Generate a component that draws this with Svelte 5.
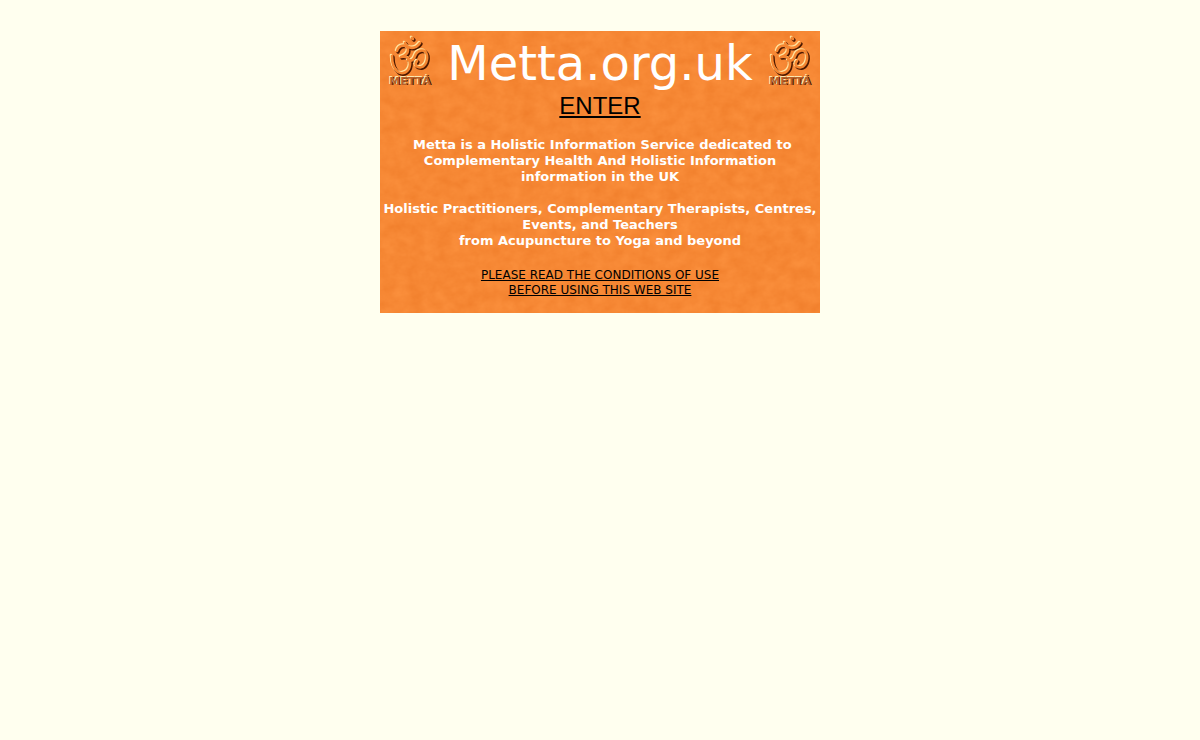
<script>
  const marks = ["left", "right"];
</script>

{#snippet emblem(side)}
  <svg class="emblem" viewBox="0 0 60 60" role="img" aria-label="Metta">
    <defs>
      <g id="om-{side}" fill="none" stroke-linecap="round" stroke-linejoin="round">
        <path d="M17 20 C19 13 28 13 28 19 C28 23 24 25 21 26 C27 25 31 28 30 34 C29 41 23 44 18 41 C14 38 12 33 12 25" />
        <path d="M28 29 C32 31 34 28 35 25 C37 19 45 17 47 24 C48 31 44 38 38 36 C35 35 35 32 37 30" />
        <path d="M25 12 C28 19 36 18 40 12" />
        <path d="M32 7 L33 8" />
      </g>
    </defs>
    <use href="#om-{side}" x="1" y="1" stroke="#4a1800" stroke-width="3.4" />
    <use href="#om-{side}" x="-1" y="-1" stroke="#ffe4a0" stroke-width="2.6" />
    <use href="#om-{side}" stroke="#f48530" stroke-width="2.6" />
    <g class="name" text-anchor="middle">
      <text x="31" y="54" fill="#3c1200">METTÁ</text>
      <text x="29" y="53" fill="#ffe8b0">METTÁ</text>
      <text x="30" y="54" fill="#b8602a">METTÁ</text>
    </g>
  </svg>
{/snippet}

<main class="card">
  <svg class="texture" aria-hidden="true">
    <filter id="paper" x="0" y="0" width="100%" height="100%" color-interpolation-filters="sRGB">
      <feTurbulence type="fractalNoise" baseFrequency="0.07 0.09" numOctaves="4" seed="4" stitchTiles="stitch" />
      <feColorMatrix values="0.05 0 0 0 0.94  0.08 0 0 0 0.492  0.08 0 0 0 0.165  0 0 0 0 1" />
    </filter>
    <rect width="100%" height="100%" filter="url(#paper)" />
  </svg>

  <header class="banner">
    {@render emblem(marks[0])}
    <h1>Metta.org.uk</h1>
    {@render emblem(marks[1])}
  </header>

  <a class="enter" href="/home">ENTER</a>

  <p class="intro">
    &nbsp;Metta is a Holistic Information Service dedicated to<br />
    Complementary Health And Holistic Information<br />
    information in the UK
  </p>
  <p class="intro">
    Holistic Practitioners, Complementary Therapists, Centres,<br />
    Events, and Teachers<br />
    from Acupuncture to Yoga and beyond
  </p>

  <a class="conditions" href="/conditions">
    PLEASE READ THE CONDITIONS OF USE<br />
    BEFORE USING THIS WEB SITE
  </a>
</main>

<style>
  :global(body) {
    margin: 0;
    background: #ffffef;
  }

  .card {
    position: relative;
    display: flex;
    flex-direction: column;
    align-items: center;
    box-sizing: border-box;
    max-width: 440px;
    margin: 31px auto 0;
    padding-bottom: 15px;
    background: #f88834;
    font-family: Verdana, "DejaVu Sans", sans-serif;
    text-align: center;
    isolation: isolate;
  }

  .texture {
    position: absolute;
    inset: 0;
    z-index: -1;
    width: 100%;
    height: 100%;
  }

  .banner {
    display: flex;
    align-items: flex-start;
    justify-content: space-between;
    width: 100%;
  }

  .emblem {
    flex: none;
    width: 60px;
    height: 60px;
  }

  .name {
    font: bold 11px "DejaVu Sans", sans-serif;
  }

  h1 {
    margin: 0;
    padding-top: 2px;
    color: #fff;
    font-size: 48px;
    font-weight: normal;
    line-height: 60px;
  }

  .enter {
    margin-bottom: 2px;
    color: #000;
    font: 24px/26px "Liberation Sans", Arial, sans-serif;
  }

  .intro {
    margin: 16px 0 0;
    color: #fff;
    font-size: 13px;
    font-weight: bold;
    line-height: 16px;
  }

  .conditions {
    margin-top: 19px;
    color: #000;
    font-size: 12px;
    line-height: 15px;
  }
</style>
